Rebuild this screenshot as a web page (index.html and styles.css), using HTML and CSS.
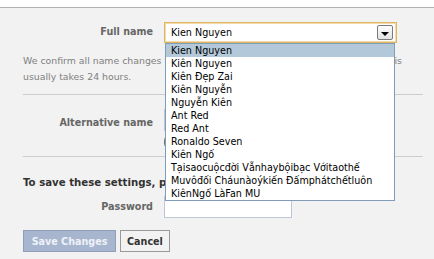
FILE: index.html
```html
<!DOCTYPE html>
<html lang="en">

<head>
  <meta charset="UTF-8">
  <title>Name Settings</title>
  <link rel="stylesheet" href="styles.css">
</head>

<body>
  <div class="topbar"></div>
  <div class="page">
    <div class="row name-row">
      <label class="label">Full name</label>
      <div class="field">
        <div class="select">
          <span class="select-value">Kien Nguyen</span>
          <span class="select-btn"><span class="caret"></span></span>
        </div>
        <ul class="dropdown">
          <li class="selected">Kien Nguyen</li>
          <li>Kiên Nguyen</li>
          <li>Kiên Đẹp Zai</li>
          <li>Kiên Nguyễn</li>
          <li>Nguyễn Kiên</li>
          <li>Ant Red</li>
          <li>Red Ant</li>
          <li>Ronaldo Seven</li>
          <li>Kiên Ngố</li>
          <li>Tạisaocuộcđời Vẫnhaybộibạc Vớitaothế</li>
          <li>Muvôđối Cháunàoýkiến Đấmphátchếtluôn</li>
          <li>KiênNgố LàFan MU</li>
        </ul>
      </div>
    </div>

    <p class="note">We confirm all name changes to make sure they follow our site name policy. This<br>usually takes 24 hours.</p>

    <hr class="divider">

    <div class="row alt-row">
      <label class="label">Alternative name</label>
      <div class="field">
        <input class="text-input" type="text">
        <div class="check-line"><input type="checkbox" class="check"> Include this on my profile</div>
      </div>
    </div>

    <hr class="divider">

    <p class="save-note">To save these settings, please enter your password.</p>

    <div class="row pass-row">
      <label class="label">Password</label>
      <div class="field">
        <input class="text-input pass-input" type="password">
      </div>
    </div>

    <div class="buttons">
      <button class="btn btn-save" disabled>Save Changes</button>
      <button class="btn btn-cancel">Cancel</button>
    </div>
  </div>
</body>

</html>
```

FILE: styles.css
```css
body {
  margin: 0;
  padding: 0;
  font-family: "DejaVu Sans", Tahoma, sans-serif;
  font-size: 9.5px;
  background: #f2f2f2;
  color: #333;
  height: 259px;
  overflow: hidden;
}

.topbar {
  height: 7px;
  background: #fff;
  border-bottom: 1px solid #b1b1b1;
}

.page {
  padding: 14px 11px 0 23px;
}

.row {
  display: grid;
  grid-template-columns: 130px 1fr;
  column-gap: 11px;
  align-items: start;
}

.label {
  text-align: right;
  font-weight: bold;
  color: #666;
  font-size: 9.6px;
}

.name-row .label {
  padding-top: 4px;
}

.field {
  position: relative;
}

.select {
  height: 19px;
  width: 222px;
  border: 1px solid #dfb463;
  box-shadow: inset 0 0 0 1px #f3dca9;
  background: #fff;
  display: flex;
  align-items: center;
  justify-content: space-between;
  padding-left: 6px;
  padding-right: 3px;
  font-size: 9.6px;
  color: #000;
}

.select-btn {
  width: 14px;
  height: 13px;
  border: 1px solid #7a7a7a;
  border-radius: 2px;
  background: linear-gradient(#fdfdfd, #e2e2e2);
  display: flex;
  align-items: center;
  justify-content: center;
}

.caret {
  width: 0;
  height: 0;
  border-left: 4px solid transparent;
  border-right: 4px solid transparent;
  border-top: 4px solid #000;
  margin-top: 2px;
}

.dropdown {
  position: absolute;
  top: 21px;
  left: 1px;
  width: 228px;
  margin: 0;
  padding: 0;
  list-style: none;
  background: #fff;
  border: 1px solid #7f9db9;
  z-index: 5;
  font-size: 9.6px;
  color: #000;
}

.dropdown li {
  height: 13px;
  line-height: 13px;
  padding-left: 5px;
  white-space: nowrap;
}

.dropdown li.selected {
  background: #b3c9d9;
}

.note {
  margin: 10px 0 0;
  line-height: 16px;
  color: #808080;
  font-size: 9.35px;
  white-space: nowrap;
}

.divider {
  border: 0;
  border-top: 1px solid #cccccc;
  margin: 9px 0 0;
  width: 400px;
}

.alt-row {
  margin-top: 14px;
}

.alt-row .label {
  padding-top: 8px;
}

.text-input {
  display: block;
  width: 124px;
  height: 18px;
  border: 1px solid #bdc7d8;
  background: #fff;
  padding: 1px;
  margin: 0;
}

.check-line {
  margin-top: 5px;
  display: flex;
  align-items: center;
  gap: 4px;
  color: #333;
}

.check {
  width: 10px;
  height: 10px;
  margin: 0;
}

.save-note {
  margin: 20px 0 0;
  font-weight: bold;
  font-size: 10.2px;
  color: #333;
}

.pass-row {
  margin-top: 8px;
}

.pass-row .label {
  padding-top: 5px;
}

.buttons {
  margin-top: 12px;
  display: flex;
  gap: 4px;
}

.btn {
  font-family: "DejaVu Sans", Tahoma, sans-serif;
  font-size: 9.6px;
  font-weight: bold;
  height: 22px;
  padding: 0 6px;
  margin: 0;
  white-space: nowrap;
  cursor: pointer;
}

.btn-save {
  background: #a8b5cf;
  color: #eef1f7;
  border: 1px solid #8f9db9;
  width: 93px;
}

.btn-cancel {
  background: #f2f2f2;
  color: #333;
  border: 1px solid #999;
  width: 50px;
}
```
